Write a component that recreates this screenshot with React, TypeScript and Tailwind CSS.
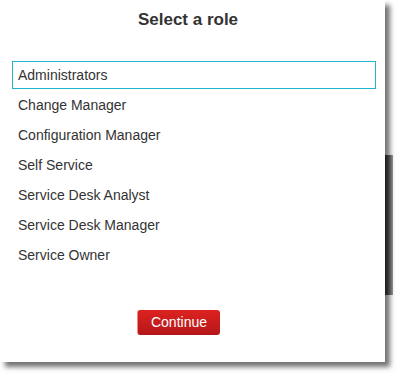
const roles = [
  "Administrators",
  "Change Manager",
  "Configuration Manager",
  "Self Service",
  "Service Desk Analyst",
  "Service Desk Manager",
  "Service Owner",
];

const App = () => {
  const selected = 0;
  return (
    <div className="w-[400px] h-[376px] bg-white relative font-['Liberation_Sans',Arial,sans-serif] text-[#333]">
      {/* dark strip showing behind the dialog shadow */}
      <div className="absolute left-[385px] top-[155px] w-[8px] h-[140px] bg-gradient-to-r from-[#3c3c3c] to-[#9a9a9a]" />
      <div className="relative w-[385px] h-[362px] bg-white shadow-[5px_5px_5px_rgba(0,0,0,0.55)] flex flex-col">
        <h2 className="text-center text-[17px] font-bold pt-[10px] leading-[20px] pr-[9px]">Select a role</h2>
        <ul className="mt-[31px] px-[12px] mr-[-3px] flex flex-col gap-[2px]">
          {roles.map((r, i) => (
            <li
              key={r}
              className={`h-[28px] flex items-center pl-[5px] text-[14px] ${
                i === selected ? "border border-[#1fb5cf]" : "border border-transparent"
              }`}
            >
              {r}
            </li>
          ))}
        </ul>
        <div className="mt-auto mb-[27px] flex justify-center pr-[28px]">
          <button className="w-[83px] h-[25px] rounded-[3px] text-white text-[14px] bg-gradient-to-b from-[#dc2320] to-[#b5161a] border-l border-[#e88]">
            Continue
          </button>
        </div>
      </div>
    </div>
  );
};

export default App;
